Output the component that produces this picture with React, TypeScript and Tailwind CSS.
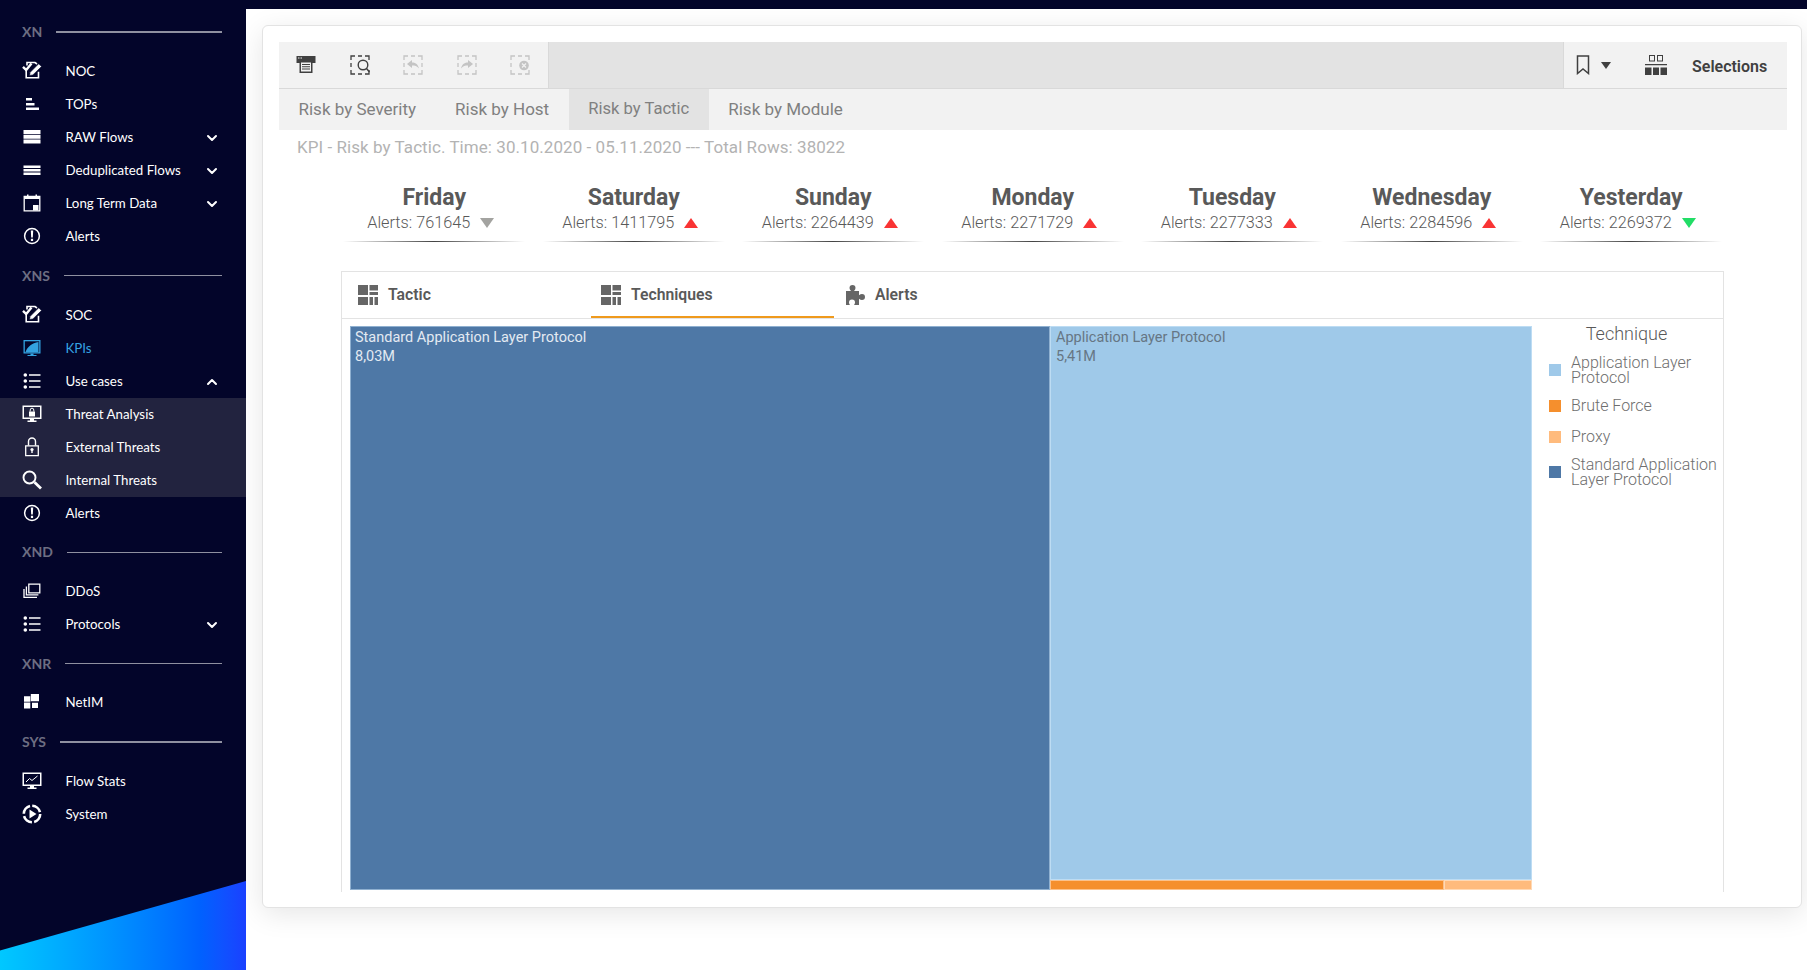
import type { ReactNode } from "react";
import { ChevronDown, ChevronUp } from "lucide-react";

const lato = { fontFamily: "Lato, sans-serif" };

function IconBox({ children }: { children: ReactNode }) {
  return (
    <svg viewBox="0 0 20 20" className="h-5 w-5 shrink-0 -translate-y-px" fill="none" stroke="none">
      {children}
    </svg>
  );
}

const NocIcon = () => (
  <IconBox>
    <path d="M4.200 8.500v8.300h12.300v-6M5 4.500V1.500h8l2 1.500" stroke="#fff" strokeWidth="1.600" />
    <path d="M1 5.800l3.200 3.200 5.300-6.500" stroke="#fff" strokeWidth="2.400" />
    <path d="M7.500 14.500l.7-3.200 8.500-8.500 2.800 2.800-8.600 8.300z" fill="#fff" stroke="#03052a" strokeWidth=".6" />
  </IconBox>
);
const TopsIcon = () => (
  <IconBox>
    <path d="M4 4h6v2.500H4zM4 9h8.500v2.500H4zM4 13.500h13V16H4z" fill="#fff" />
  </IconBox>
);
const RawIcon = () => (
  <IconBox>
    <path d="M1.500 3h17v4h-17zM1.500 7.700h17v4h-17zM1.500 12.400h17v4h-17z" fill="#fff" />
  </IconBox>
);
const DedupIcon = () => (
  <IconBox>
    <path d="M1.500 5.500h17v2.500h-17zM1.500 9h17v2.500h-17zM1.500 12.500h17V15h-17z" fill="#fff" />
  </IconBox>
);
const CalendarIcon = () => (
  <IconBox>
    <path d="M2.200 3.500h15.600v14.300H2.200z" stroke="#fff" strokeWidth="1.300" />
    <path d="M2.200 3.500h15.600v2.500H2.200zM5 1.500h1.500v2.500H5zM13.500 1.500H15v2.500h-1.500zM11 12h5.500v5.500H11z" fill="#fff" />
  </IconBox>
);
const AlertIcon = () => (
  <IconBox>
    <circle cx="10" cy="10" r="7.400" stroke="#fff" strokeWidth="1.500" />
    <path d="M8.800 4.500h2.400l-.4 7H9.200zM8.900 12.700h2.200v2.300H8.900z" fill="#fff" />
  </IconBox>
);
const KpiIcon = () => (
  <IconBox>
    <path d="M1.500 2h17v13.500h-17z" fill="#33a2e0" />
    <path d="M2.800 3.300h14.400v10.900H2.800z" fill="#03052a" />
    <path d="M3.500 14C5 9 10 5 16.500 4V14z" fill="#33a2e0" />
    <path d="M8.500 15.500h3v1.500h3V18h-9v-1h3z" fill="#33a2e0" />
  </IconBox>
);
const ListIcon = () => (
  <IconBox>
    <circle cx="3.300" cy="4" r="1.800" fill="#fff" />
    <circle cx="3.300" cy="10" r="1.800" fill="#fff" />
    <circle cx="3.300" cy="16" r="1.800" fill="#fff" />
    <path d="M7 4h11.500M7 10h11.500M7 16h11.500" stroke="#fff" strokeWidth="1.500" />
  </IconBox>
);
const MonitorLockIcon = () => (
  <IconBox>
    <path d="M.500 1.500h19v13.500H.500z" fill="#fff" />
    <path d="M2 3h16v10.500H2z" fill="#22233f" />
    <path d="M7 7.500h6v5H7z" fill="#fff" />
    <path d="M8.200 7.500V6a1.800 1.800 0 013.600 0v1.500" stroke="#fff" strokeWidth="1" />
    <path d="M8 15h4v1.500h2.500V18h-9v-1.500H8z" fill="#fff" />
  </IconBox>
);
const LockIcon = () => (
  <IconBox>
    <path d="M6.500 8.500V4.500a3.500 3.500 0 017 0v4" stroke="#fff" strokeWidth="1.400" />
    <path d="M3.700 8.800h12.600v9.900H3.700z" stroke="#fff" strokeWidth="1.300" />
    <circle cx="10" cy="12.500" r="1.600" fill="#fff" />
    <path d="M9.300 13h1.400v3H9.300z" fill="#fff" />
  </IconBox>
);
const SearchIcon = () => (
  <IconBox>
    <circle cx="7.500" cy="7.500" r="6" stroke="#fff" strokeWidth="1.900" />
    <path d="M12.500 12.300l6.500 6.200" stroke="#fff" strokeWidth="2.800" />
  </IconBox>
);
const DdosIcon = () => (
  <IconBox>
    <path d="M6.800 3.200h11v8.600h-11z" stroke="#fff" strokeWidth="1.300" />
    <path d="M4.400 5.500v8.300h12M2 8v8.300h13" stroke="#fff" strokeWidth="1.300" />
  </IconBox>
);
const NetImIcon = () => (
  <IconBox>
    <path d="M2 4.200h6.300v5.600H2zM8.800 2H17v7.300H8.800zM2 10.500h6.300v6H2zM10 10.700h6v5.300h-6z" fill="#fff" />
  </IconBox>
);
const FlowStatsIcon = () => (
  <IconBox>
    <path d="M.500 1.500h19v13.500H.500z" fill="#fff" />
    <path d="M2 3h16v10.500H2z" fill="#03052a" />
    <path d="M4 11l3.500-3.500 2.500 2 5.500-4.500" stroke="#fff" strokeWidth="1" />
    <path d="M8 15h4v1.500h2.500V18h-9v-1.500H8z" fill="#fff" />
  </IconBox>
);
const SystemIcon = () => (
  <IconBox>
    <circle cx="10" cy="10" r="8.200" stroke="#fff" strokeWidth="2.600" strokeDasharray="10.600 2.280" />
    <path d="M7.500 5.500l7 4.500-7 4.500z" fill="#fff" />
  </IconBox>
);

type NavRow = { label: string; icon: ReactNode; arrow?: "down" | "up"; active?: boolean; sub?: boolean };

const sections: { title: string; thick?: boolean; nudge?: boolean; rows: NavRow[] }[] = [
  {
    title: "XN",
    thick: true,
    rows: [
      { label: "NOC", icon: <NocIcon /> },
      { label: "TOPs", icon: <TopsIcon /> },
      { label: "RAW Flows", icon: <RawIcon />, arrow: "down" },
      { label: "Deduplicated Flows", icon: <DedupIcon />, arrow: "down" },
      { label: "Long Term Data", icon: <CalendarIcon />, arrow: "down" },
      { label: "Alerts", icon: <AlertIcon /> },
    ],
  },
  {
    title: "XNS",
    nudge: true,
    rows: [
      { label: "SOC", icon: <NocIcon /> },
      { label: "KPIs", icon: <KpiIcon />, active: true },
      { label: "Use cases", icon: <ListIcon />, arrow: "up" },
      { label: "Threat Analysis", icon: <MonitorLockIcon />, sub: true },
      { label: "External Threats", icon: <LockIcon />, sub: true },
      { label: "Internal Threats", icon: <SearchIcon />, sub: true },
      { label: "Alerts", icon: <AlertIcon /> },
    ],
  },
  {
    title: "XND",
    rows: [
      { label: "DDoS", icon: <DdosIcon /> },
      { label: "Protocols", icon: <ListIcon />, arrow: "down" },
    ],
  },
  { title: "XNR", rows: [{ label: "NetIM", icon: <NetImIcon /> }] },
  {
    title: "SYS",
    thick: true,
    rows: [
      { label: "Flow Stats", icon: <FlowStatsIcon /> },
      { label: "System", icon: <SystemIcon /> },
    ],
  },
];

function Sidebar() {
  return (
    <aside className="relative h-[970px] w-[246px] shrink-0 overflow-hidden bg-[#03052a] pt-5" style={lato}>
      {sections.map((section) => (
        <div key={section.title} className="mb-[10.5px]">
          <div className="mb-[11px] flex h-6 items-center gap-[14px] pl-[22px] pr-6">
            <span className="text-sm font-bold text-[#6d6e82]">{section.title}</span>
            <span className={`flex-1 bg-[#8f90a0] ${section.thick ? "h-[2px]" : "h-px"}`} />
          </div>
          {section.rows.map((row) => (
            <div
              key={row.label + section.title}
              className={`flex h-[33px] items-center pl-[21.5px] pr-[26px] ${row.sub ? "bg-[#22233f]" : ""} ${
                section.nudge ? "pt-[2px]" : ""
              }`}
            >
              {row.icon}
              <span className={`ml-[24px] flex-1 text-[13.3px] ${row.active ? "text-[#35a3e2]" : "text-white"}`}>
                {row.label}
              </span>
              {row.arrow === "down" && <ChevronDown size={16} strokeWidth={3} className="text-white" />}
              {row.arrow === "up" && <ChevronUp size={16} strokeWidth={3} className="text-white" />}
            </div>
          ))}
        </div>
      ))}
      <div className="absolute bottom-0 left-0 h-[89px] w-full bg-gradient-to-r from-[#00c8ff] to-[#1a40ff] [clip-path:polygon(0_78%,100%_0,100%_100%,0_100%)]" />
    </aside>
  );
}

const SheetIcon = () => (
  <svg viewBox="0 0 20 20" className="h-5 w-5">
    <path d="M.500 1h19v7h-19z" fill="#404040" />
    <path d="M3.500 6h13v12h-13z" fill="#404040" />
    <path d="M5 7.500h10v9H5z" fill="#f2f2f2" />
    <path d="M6 9h8v1H6zM6 11.300h8v1H6zM6 13.600h8v1H6z" fill="#404040" />
    <path d="M2 2.500h1.500v1H2zM4.500 2.500H6v1H4.500z" fill="#f2f2f2" />
  </svg>
);

function DashedBox({ children, color }: { children: ReactNode; color: string }) {
  return (
    <svg viewBox="0 0 20 20" className="h-5 w-5" fill="none" style={{ color }}>
      <path
        d="M1 5V1h4M8 1h4M15 1h4v4M19 15v4h-4M12 19H8M5 19H1v-4M1 12V8"
        stroke="currentColor"
        strokeWidth="1.300"
      />
      {children}
    </svg>
  );
}

const kpis = [
  { day: "Friday", alerts: "761645", dir: "gray" },
  { day: "Saturday", alerts: "1411795", dir: "up" },
  { day: "Sunday", alerts: "2264439", dir: "up" },
  { day: "Monday", alerts: "2271729", dir: "up" },
  { day: "Tuesday", alerts: "2277333", dir: "up" },
  { day: "Wednesday", alerts: "2284596", dir: "up" },
  { day: "Yesterday", alerts: "2269372", dir: "green" },
];

function Trend({ dir }: { dir: string }) {
  if (dir === "up")
    return (
      <svg viewBox="0 0 14 10" className="h-[10px] w-[14px] fill-[#f93434]">
        <path d="M7 0l7 10H0z" />
      </svg>
    );
  return (
    <svg viewBox="0 0 14 10" className={`h-[10px] w-[14px] ${dir === "green" ? "fill-[#22dd66]" : "fill-[#a3a3a0]"}`}>
      <path d="M0 0h14L7 10z" />
    </svg>
  );
}

const TreemapIcon = () => (
  <svg viewBox="0 0 20 20" className="h-5 w-5 fill-[#666666]">
    <path d="M0 0h10v10H0zM11.500 0H20v5.500h-8.500zM11.500 7H20v3h-8.500zM0 12h10v8H0zM11.500 12h3.500v8h-3.500zM16.500 12H20v8h-3.500z" />
  </svg>
);

const PuzzleIcon = () => (
  <svg viewBox="0 0 20 20" className="ml-px h-5 w-5 fill-[#666666]">
    <path d="M1 6h5C5 5 4.500 4 4.500 3a3 3 0 016 0c0 1-.5 2-1.500 3h5v4.300c1-.8 2-1.300 3-1.300a3 3 0 010 6c-1 0-2-.5-3-1.300V20H9c.5-.8 1-1.500 1-2.500a3 3 0 00-6 0c0 1 .5 1.700 1 2.500H1z" />
  </svg>
);

function ChartTab({ label, icon, active }: { label: string; icon: ReactNode; active?: boolean }) {
  return (
    <div
      className={`flex h-[46px] w-[243px] items-center gap-[10px] pl-[10px] text-[15.750px] font-semibold text-[#595959] ${
        active ? "border-b-2 border-[#ef9a1d] pt-[2px]" : ""
      }`}
    >
      {icon}
      <span>{label}</span>
    </div>
  );
}

const legend = [
  { label: "Application Layer Protocol", color: "bg-[#9fc9e9]", top: "mt-0" },
  { label: "Brute Force", color: "bg-[#f58f2d]", top: "mt-[13px]" },
  { label: "Proxy", color: "bg-[#ffbb7d]", top: "mt-[16px]" },
  { label: "Standard Application Layer Protocol", color: "bg-[#4e78a6]", top: "mt-[12.500px]" },
];

function Card() {
  return (
    <section className="h-[883px] rounded-md border border-[#e3e3e3] bg-white pl-[16px] pr-[14px] pt-[16px] shadow-[0_6px_28px_rgba(0,0,0,0.1)]">
      <div className="flex h-[47px] border-b border-[#d9d9d9] bg-[#e3e3e3]">
        <div className="flex w-[270px] items-center gap-[33.500px] border-r border-[#d9d9d9] bg-[#f2f2f2] pl-[17px]">
          <SheetIcon />
          <DashedBox color="#404040">
            <circle cx="13" cy="10" r="4.800" stroke="currentColor" strokeWidth="1.400" fill="#f2f2f2" />
            <path d="M16.500 13.500l3 3.500" stroke="currentColor" strokeWidth="1.500" />
          </DashedBox>
          <DashedBox color="#c4c4c4">
            <path d="M19 8v4" stroke="currentColor" strokeWidth="1.300" />
            <path d="M4 9l5-4v2.500c3 0 6 1.500 7 6-2-2.500-4-3-7-3V13z" fill="currentColor" />
          </DashedBox>
          <DashedBox color="#c4c4c4">
            <path d="M19 8v4" stroke="currentColor" strokeWidth="1.300" />
            <path d="M16 9l-5-4v2.500c-3 0-6 1.500-7 6 2-2.500 4-3 7-3V13z" fill="currentColor" />
          </DashedBox>
          <DashedBox color="#c4c4c4">
            <circle cx="14" cy="10.500" r="4.800" fill="currentColor" />
            <path d="M12 8.500l4 4M16 8.500l-4 4" stroke="#f2f2f2" strokeWidth="1.200" />
          </DashedBox>
        </div>
        <div className="flex-1" />
        <div className="flex w-[224px] items-center border-l border-[#d9d9d9] bg-[#f2f2f2] pl-[12px] text-[#404040]">
          <svg viewBox="0 0 14 20" className="h-5 w-[14px]" fill="none" stroke="currentColor" strokeWidth="1.500">
            <path d="M1.500 1h11v17.500L7 14l-5.500 4.500z" />
          </svg>
          <svg viewBox="0 0 10 7" className="ml-[11px] h-[7px] w-[10px] fill-current">
            <path d="M0 0h10L5 7z" />
          </svg>
          <svg viewBox="0 0 22 22" className="ml-[34px] h-[22px] w-[22px] fill-current">
            <path d="M4 1h6v6.500H4zM5 2v4.500h4V2zM12 1h6v6.500h-6zM13 2v4.500h4V2z" fillRule="evenodd" />
            <path d="M0 10h22v1.200H0zM0 13.500h6.500V21H0zM8 13.500h6V21H8zM15.500 13.500H22V21h-6.500z" />
          </svg>
          <span className="ml-[25px] pt-[3px] text-base font-semibold">Selections</span>
        </div>
      </div>
      <div className="flex h-[41px] items-center bg-[#f2f2f2] text-[17px] text-[#808080]">
        <span className="px-[19.500px]">Risk by Severity</span>
        <span className="px-[19.500px]">Risk by Host</span>
        <span className="flex h-full items-center bg-[#e3e3e3] px-[19.500px] text-[16.600px]">Risk by Tactic</span>
        <span className="px-[19.500px]">Risk by Module</span>
      </div>
      <p className="ml-[18px] flex h-[36px] items-center text-[17px] tracking-[0.06px] text-[#b3b3b3]">
        KPI - Risk by Tactic. Time: 30.10.2020 - 05.11.2020 --- Total Rows: 38022
      </p>
      <div className="ml-[55.500px] mr-[56px] mt-[18px] grid grid-cols-7">
        {kpis.map((kpi) => (
          <div key={kpi.day} className="flex flex-col items-center">
            <span className="text-[23px] font-bold leading-[28px] text-[#595959]">{kpi.day}</span>
            <div className="mt-[1px] flex h-5 items-center gap-[10px] pr-[7px] text-[16.250px] font-light text-[#595959]">
              <span>Alerts: {kpi.alerts}</span>
              <Trend dir={kpi.dir} />
            </div>
            <div className="mt-[8px] h-px w-[182px] bg-gradient-to-r from-transparent via-[#444444] to-transparent" />
          </div>
        ))}
      </div>
      <div className="ml-[62px] mt-[29px] h-[621px] w-[1383px] border-x border-t border-[#e3e3e3]">
        <div className="flex h-[47px] items-end border-b border-[#e3e3e3] pl-[6px]">
          <ChartTab label="Tactic" icon={<TreemapIcon />} />
          <ChartTab label="Techniques" icon={<TreemapIcon />} active />
          <ChartTab label="Alerts" icon={<PuzzleIcon />} />
        </div>
        <div className="flex pl-2 pt-[7px]">
          <div className="flex h-[564px] w-[1182px]">
            <div className="w-[700px] border border-[#8fb0d0] bg-[#4e78a6] px-[4px] pt-[1px] text-[14.500px] leading-[19px] text-[#e3eaf2]">
              <div>Standard Application Layer Protocol</div>
              <div>8,03M</div>
            </div>
            <div className="flex flex-1 flex-col">
              <div className="flex-1 border border-[#bddcf3] bg-[#9fc9e9] px-[5px] pt-[1px] text-[14.500px] leading-[19px] text-[#667684]">
                <div>Application Layer Protocol</div>
                <div>5,41M</div>
              </div>
              <div className="flex h-[10px]">
                <div className="w-[394px] border border-[#fbc18b] bg-[#f58f2d]" />
                <div className="flex-1 border border-[#ffd9b5] bg-[#ffbb7d]" />
              </div>
            </div>
          </div>
          <div className="w-[191px]">
            <h3 className="mt-[-2px] pr-[2px] text-center text-lg font-light leading-5 text-[#595959]">Technique</h3>
            <ul className="mt-[11px] pl-[17px] pr-1">
              {legend.map((item) => (
                <li key={item.label} className={`flex items-center gap-[10px] ${item.top}`}>
                  <span className={`h-3 w-3 shrink-0 ${item.color}`} />
                  <span className="text-base font-light leading-[15px] text-[#6e6e6e]">{item.label}</span>
                </li>
              ))}
            </ul>
          </div>
        </div>
      </div>
    </section>
  );
}

export default function App() {
  return (
    <div className="flex h-[970px] w-[1807px] overflow-hidden bg-white" style={{ fontFamily: "Roboto, sans-serif" }}>
      <Sidebar />
      <main className="flex-1">
        <div className="h-[9px] bg-[#03052a]" />
        <div className="pl-4 pr-[5px] pt-4">
          <Card />
        </div>
      </main>
    </div>
  );
}
